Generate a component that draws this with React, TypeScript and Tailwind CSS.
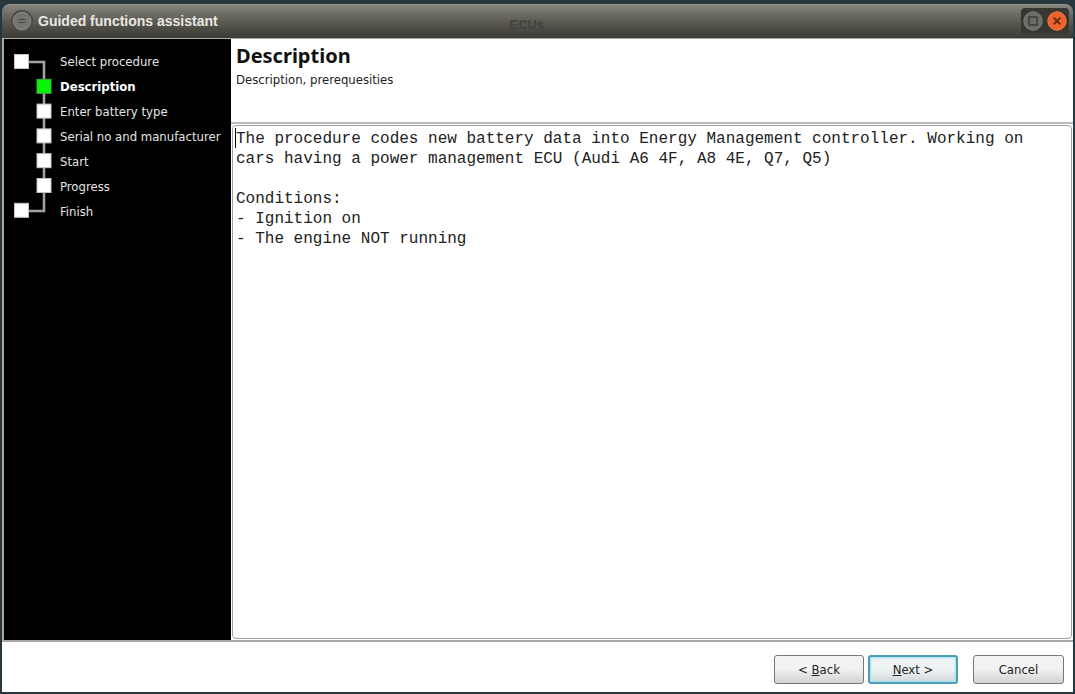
import { useState } from "react";

const steps = [
  "Select procedure",
  "Description",
  "Enter battery type",
  "Serial no and manufacturer",
  "Start",
  "Progress",
  "Finish",
];

const procedureText = `The procedure codes new battery data into Energy Management controller. Working on
cars having a power management ECU (Audi A6 4F, A8 4E, Q7, Q5)

Conditions:
- Ignition on
- The engine NOT running`;

const TitleBar = () => (
  <header className="relative flex h-[35px] shrink-0 items-center rounded-t-lg border-t border-b border-t-[#96958e] border-b-[#aaa9a5] bg-gradient-to-b from-[#85847d] via-[#5b5a53] to-[#3b3a34] pr-1 pb-px pl-2">
    <button type="button" aria-label="Window menu" className="shrink-0">
      <svg width="24" height="24" viewBox="0 0 24 24">
        <circle cx="12" cy="12" r="11" fill="#4b4a45" />
        <circle cx="12" cy="12" r="8.8" fill="#75746e" stroke="#8d8c86" />
        <path d="M8.5 10.5h7M8.5 13.5h7" stroke="#45443f" />
      </svg>
    </button>
    <h1 className="ml-1 flex-1 font-['Liberation_Sans',sans-serif] text-[14px] font-bold text-[#e9e7e2]">
      Guided functions assistant
    </h1>
    <span className="absolute top-3 left-1/2 -ml-7 font-['Liberation_Sans',sans-serif] text-[13px] leading-4 font-bold text-[#43423d]">
      ECUs
    </span>
    <div className="flex h-[26px] items-center gap-1 rounded-sm bg-[#373630] px-[2px]">
      <button type="button" aria-label="Maximize">
        <svg width="20" height="20" viewBox="0 0 20 20">
          <circle cx="10" cy="10" r="9.2" fill="#6d6c66" stroke="#807f79" />
          <rect x="6" y="6" width="8" height="8" fill="none" stroke="#302f2a" strokeWidth="1.2" />
        </svg>
      </button>
      <button type="button" aria-label="Close">
        <svg width="20" height="20" viewBox="0 0 20 20">
          <circle cx="10" cy="10" r="9.2" fill="#f0622b" stroke="#f57a42" />
          <path d="M6.7 6.7l6.6 6.6M13.3 6.7l-6.6 6.6" stroke="#5a2814" strokeWidth="1.8" />
        </svg>
      </button>
    </div>
  </header>
);

const StepList = ({ current }: { current: number }) => (
  <nav className="flex w-[227px] shrink-0 gap-[6px] bg-black pt-2 pl-2">
    <svg width="42" height="175" viewBox="0 0 42 175" className="shrink-0">
      <path d="M9.5 15h22.5v149H9.5" fill="none" stroke="#a3a3a3" strokeWidth="2.5" />
      {steps.map((step, i) => {
        const x = i === 0 || i === steps.length - 1 ? 2.5 : 25;
        return (
          <rect
            key={step}
            x={x}
            y={7.5 + i * 24.8}
            width="14"
            height="14"
            fill={i === current ? "#08f508" : "#fff"}
            stroke={i === current ? "#3fae3f" : "#c4c4c4"}
          />
        );
      })}
    </svg>
    <ol className="pt-[2px]">
      {steps.map((step, i) => (
        <li
          key={step}
          className={`h-[25px] text-[13px] leading-[25px] whitespace-nowrap ${
            i === current ? "font-bold text-white" : "text-[#e4e4e4]"
          }`}
        >
          {step}
        </li>
      ))}
    </ol>
  </nav>
);

const App = () => {
  const [current, setCurrent] = useState(1);

  return (
    <div className="flex h-screen flex-col bg-[#26373d] px-[2px] pt-1 pb-[2px] font-['DejaVu_Sans_Condensed','DejaVu_Sans',sans-serif]">
      <TitleBar />

      {/* Steps and page content */}
      <main className="flex min-h-0 flex-1 border-b-2 border-l-2 border-[#aaa6a8] bg-white">
        <StepList current={current} />

        <section className="flex min-w-0 flex-1 flex-col">
          <div className="h-[85px] shrink-0 border-b-2 border-[#bbb] pt-[3px] pl-[5px]">
            <h2 className="font-['Noto_Sans',sans-serif] text-[20px] leading-7 font-bold text-[#111]">
              Description
            </h2>
            <p className="text-[13px] leading-5 text-[#222]">Description, prerequesities</p>
          </div>
          <div className="relative m-px flex min-h-0 flex-1">
            <textarea
              readOnly
              aria-label="Procedure description"
              value={procedureText}
              className="flex-1 resize-none overflow-hidden rounded-sm border border-[#a0a0a0] px-[3px] py-[3px] font-['Liberation_Mono',monospace] text-[16px] leading-5 whitespace-pre text-[#222] outline-none"
            />
            <span className="absolute top-[3px] left-[3px] h-5 w-px bg-black" />
          </div>
        </section>
      </main>

      {/* Wizard buttons */}
      <footer className="flex h-[50px] shrink-0 items-center justify-end bg-white pt-1 pr-[9px] text-[13px] text-[#222]">
        <button
          type="button"
          onClick={() => setCurrent((c) => Math.max(c - 1, 0))}
          className="h-[29px] w-[90px] rounded-[3px] border border-[#777] bg-gradient-to-b from-[#f2f2f2] from-50% to-[#d2d2d2] pt-px"
        >
          &lt; <u>B</u>ack
        </button>
        <button
          type="button"
          onClick={() => setCurrent((c) => Math.min(c + 1, steps.length - 1))}
          className="ml-1 h-[29px] w-[90px] rounded-[3px] border-2 border-[#4d9fb8] bg-gradient-to-b from-[#eef3f4] from-50% to-[#d2d8da] pt-px shadow-[inset_0_0_2px_1px_#a5e2f0]"
        >
          <u>N</u>ext &gt;
        </button>
        <button
          type="button"
          className="ml-[15px] h-[29px] w-[91px] rounded-[3px] border border-[#777] bg-gradient-to-b from-[#f2f2f2] from-50% to-[#d2d2d2] pt-px"
        >
          Cancel
        </button>
      </footer>
    </div>
  );
};

export default App;
